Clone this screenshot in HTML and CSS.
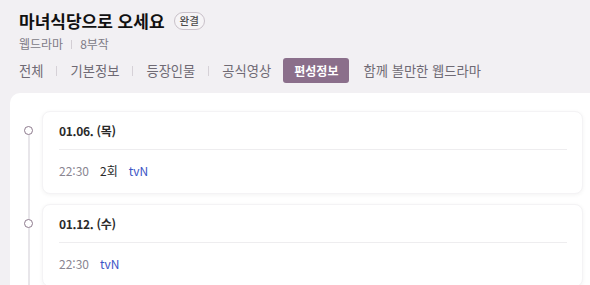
FILE: index.html
```html
<!DOCTYPE html>
<html lang="ko">
<head>
<meta charset="utf-8">
<link rel="stylesheet" href="styles.css">
</head>
<body>
<header class="head">
  <div class="title-row">
    <h1 class="title">마녀식당으로 오세요</h1>
    <span class="badge">완결</span>
  </div>
  <div class="meta">
    <span>웹드라마</span><span class="meta-sep"></span><span>8부작</span>
  </div>
  <nav class="tabs">
    <span class="tab first">전체</span><span class="tab-sep"></span>
    <span class="tab">기본정보</span><span class="tab-sep"></span>
    <span class="tab">등장인물</span><span class="tab-sep"></span>
    <span class="tab">공식영상</span>
    <span class="tab active">편성정보</span>
    <span class="tab">함께 볼만한 웹드라마</span>
  </nav>
</header>
<main class="panel">
  <div class="item first">
    <div class="marker"><span class="line-top"></span><span class="dot"></span><span class="line-bottom"></span></div>
    <div class="card">
      <div class="date">01.06. (목)</div>
      <div class="row"><span class="time">22:30</span><span class="ep">2회</span><span class="ch">tvN</span></div>
    </div>
  </div>
  <div class="item">
    <div class="marker"><span class="line-top"></span><span class="dot"></span><span class="line-bottom"></span></div>
    <div class="card">
      <div class="date">01.12. (수)</div>
      <div class="row"><span class="time">22:30</span><span class="ch">tvN</span></div>
    </div>
  </div>
</main>
</body>
</html>
```

FILE: styles.css
```css
* { box-sizing: border-box; }
html, body { margin: 0; padding: 0; }
body {
  background: #f2f0f3;
  font-family: "Noto Sans CJK KR", "Noto Sans", sans-serif;
  color: #222;
  width: 590px;
  height: 285px;
  overflow: hidden;
}
.head { padding: 11px 0 0 19px; }
.title-row { display: flex; align-items: center; height: 20px; }
.title { margin: 0; font-size: 17px; font-weight: 700; line-height: 20px; color: #111; }
.badge {
  margin-left: 9px;
  height: 18px;
  padding: 0 5px;
  border: 1px solid #c9c1c9;
  border-radius: 9px;
  font-size: 10.5px;
  font-weight: 500;
  line-height: 16px;
  color: #4a4a4a;
  background: #f6f4f6;
}
.meta {
  display: flex; align-items: center;
  margin-top: 4px;
  height: 18px;
  font-size: 12px; line-height: 18px;
  color: #807b86;
}
.meta-sep { width: 1px; height: 9px; background: #d3ced4; margin: 0 8px; }
.tabs { display: flex; align-items: center; margin-top: 5px; height: 25px; }
.tab {
  font-size: 13.3px; line-height: 25px; height: 25px;
  color: #6f6a74;
  padding: 0 12px;
  border-radius: 3px;
  white-space: nowrap;
}
.tab.first { padding-left: 0; }
.tab-sep { width: 1px; height: 10px; background: #d6d1d7; margin: 0 1px; }
.tab.active {
  background: #8b6f8b;
  color: #fff;
  font-weight: 700;
  font-size: 12px;
  padding: 0 11px;
  margin-right: 2px;
}
.panel {
  margin: 10px 0 0 10px;
  background: #fff;
  border-radius: 10px 0 0 0;
  padding: 18px 7px 0 0;
  height: 200px;
}
.item { display: flex; padding-bottom: 10px; }
.marker { display: flex; flex-direction: column; align-items: center; width: 9px; margin: 0 9px 0 14px; }
.line-top { width: 2px; height: 15px; background: #e8e6ea; }
.item.first .line-top { background: transparent; }
.dot { width: 9px; height: 9px; border: 1.5px solid #8d7a8d; border-radius: 50%; background: #fff; flex: none; }
.line-bottom { width: 2px; flex: 1; background: #e8e6ea; margin-bottom: -10px; }
.card {
  flex: 1;
  background: #fff;
  border: 1px solid #f4f3f5;
  border-radius: 8px;
  box-shadow: 0 1px 4px rgba(0, 0, 0, 0.05);
  padding: 10px 15px 13px 16px;
}
.date {
  font-size: 12px; font-weight: 700; line-height: 18px; color: #2a2a2a;
  letter-spacing: -0.3px;
  padding-bottom: 9px;
  border-bottom: 1px solid #eeedef;
}
.row { display: flex; gap: 11px; margin-top: 12px; font-size: 12px; line-height: 18px; }
.time { color: #8a8691; }
.ep { color: #2b2b2b; }
.ch { color: #3b55c6; }
```
